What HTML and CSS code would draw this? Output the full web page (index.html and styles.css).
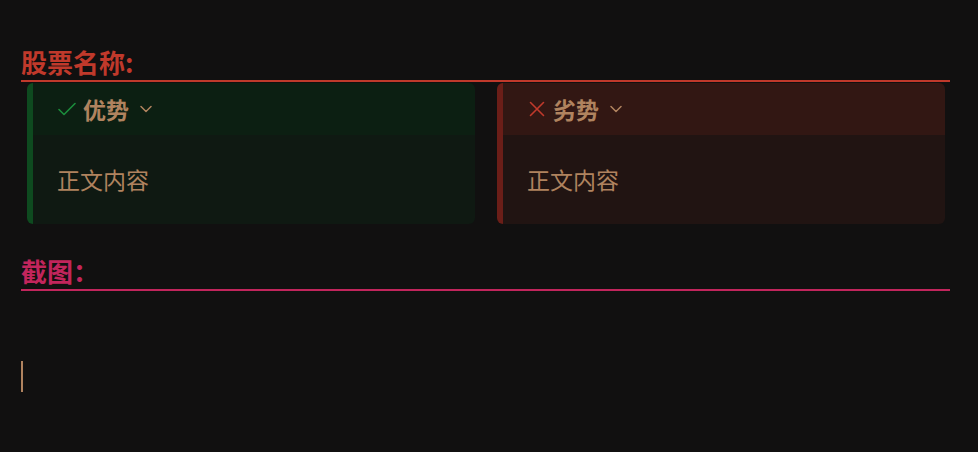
FILE: index.html
```html
<!DOCTYPE html>
<html lang="zh">
<head>
<meta charset="utf-8">
<link rel="stylesheet" href="styles.css">
</head>
<body>
<div class="doc">
  <h2 class="heading heading-red">股票名称:</h2>
  <div class="callouts">
    <div class="callout callout-good">
      <div class="callout-title">
        <svg class="icon" viewBox="0 0 18 18" width="18" height="18"><path d="M1 9.5l5 5L17 3.5" fill="none" stroke="currentColor" stroke-width="1.6" stroke-linecap="round" stroke-linejoin="round"/></svg>
        <span class="title-text">优势</span>
        <svg class="chev" viewBox="0 0 12 8" width="12" height="8"><path d="M1 1.5l5 5 5-5" fill="none" stroke="currentColor" stroke-width="1.5" stroke-linecap="round" stroke-linejoin="round"/></svg>
      </div>
      <div class="callout-body">正文内容</div>
    </div>
    <div class="callout callout-bad">
      <div class="callout-title">
        <svg class="icon" viewBox="0 0 18 18" width="18" height="18"><path d="M2.5 2.5l13 13M15.5 2.5l-13 13" fill="none" stroke="currentColor" stroke-width="1.6" stroke-linecap="round"/></svg>
        <span class="title-text">劣势</span>
        <svg class="chev" viewBox="0 0 12 8" width="12" height="8"><path d="M1 1.5l5 5 5-5" fill="none" stroke="currentColor" stroke-width="1.5" stroke-linecap="round" stroke-linejoin="round"/></svg>
      </div>
      <div class="callout-body">正文内容</div>
    </div>
  </div>
  <h2 class="heading heading-pink">截图：</h2>
  <div class="editor-line"><span class="caret"></span></div>
</div>
</body>
</html>
```
FILE: styles.css
```css
html, body {
  margin: 0;
  padding: 0;
  background: #111010;
}
body {
  font-family: "Noto Sans CJK SC", "Noto Sans", sans-serif;
  color: #b0835f;
}
.doc {
  width: 929px;
  margin-left: 21px;
  padding-top: 44px;
}
.heading {
  margin: 0;
  font-size: 26px;
  font-weight: 700;
  line-height: 36px;
  border-bottom: 2px solid;
}
.heading-red {
  color: #c0392b;
  border-color: #c0392b;
}
.heading-pink {
  color: #c2255c;
  border-color: #c2255c;
  margin-top: 29px;
}
.callouts {
  display: grid;
  grid-template-columns: 1fr 1fr;
  gap: 22px;
  padding: 1px 5px 0 6px;
}
.callout {
  border-radius: 6px;
  border-left: 6px solid;
  overflow: hidden;
}
.callout-good {
  border-color: #0e4a1f;
  background: #0f1912;
}
.callout-good .callout-title { background: #0c1f12; }
.callout-good .icon { color: #1c8c3c; }
.callout-bad {
  border-color: #6b1e18;
  background: #211412;
}
.callout-bad .callout-title { background: #321713; }
.callout-bad .icon { color: #c0392b; }
.callout-title {
  height: 52px;
  display: flex;
  align-items: center;
  padding-left: 25px;
}
.icon {
  margin-right: 7px;
}
.title-text {
  font-size: 23px;
  font-weight: 700;
  line-height: 30px;
  color: #b0835f;
}
.chev {
  color: #b0835f;
  margin-left: 11px;
}
.callout-body {
  height: 89px;
  display: flex;
  align-items: center;
  padding-left: 24px;
  font-size: 23px;
  padding-bottom: 2px;
  box-sizing: border-box;
}
.editor-line {
  padding-top: 70px;
  height: 32px;
}
.caret {
  display: block;
  width: 2px;
  height: 31px;
  background: #b0835f;
}
```
